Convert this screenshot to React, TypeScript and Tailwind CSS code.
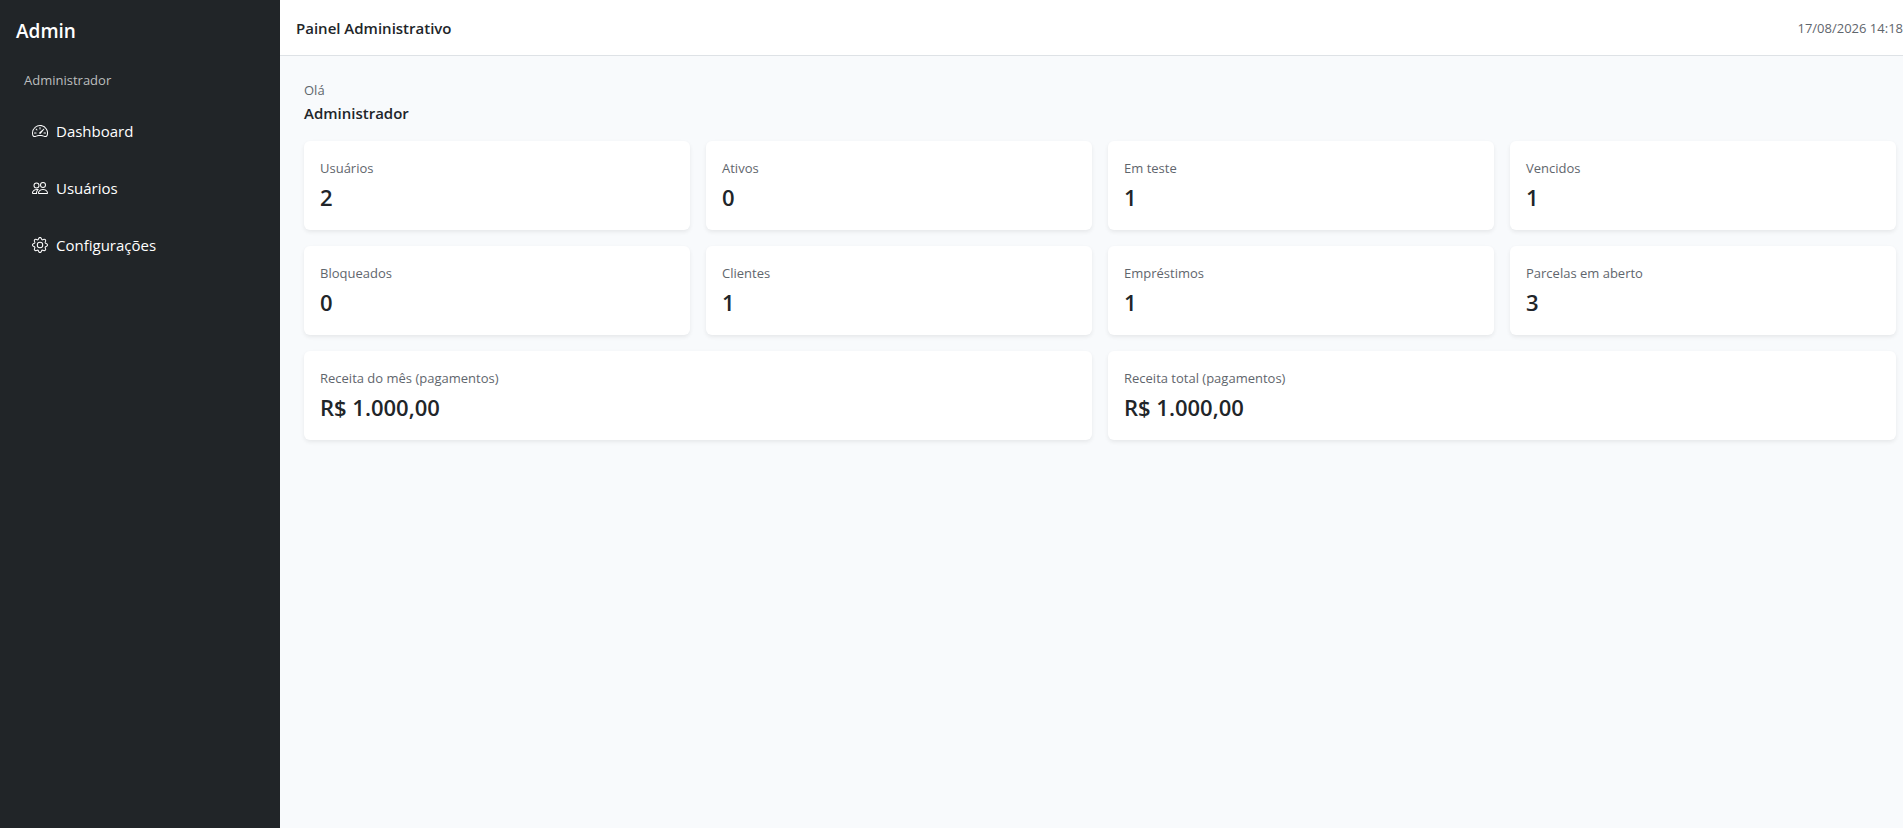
import React from "react";
import { BsGear, BsPeople, BsSpeedometer2 } from "react-icons/bs";
import type { IconType } from "react-icons";

interface NavItemInterface {
  label: string;
  href: string;
  icon: IconType;
}

interface StatInterface {
  label: string;
  value: string;
  wide?: boolean;
}

const navItems: NavItemInterface[] = [
  { label: "Dashboard", href: "#dashboard", icon: BsSpeedometer2 },
  { label: "Usuários", href: "#usuarios", icon: BsPeople },
  { label: "Configurações", href: "#configuracoes", icon: BsGear },
];

const stats: StatInterface[] = [
  { label: "Usuários", value: "2" },
  { label: "Ativos", value: "0" },
  { label: "Em teste", value: "1" },
  { label: "Vencidos", value: "1" },
  { label: "Bloqueados", value: "0" },
  { label: "Clientes", value: "1" },
  { label: "Empréstimos", value: "1" },
  { label: "Parcelas em aberto", value: "3" },
  { label: "Receita do mês (pagamentos)", value: "R$ 1.000,00", wide: true },
  { label: "Receita total (pagamentos)", value: "R$ 1.000,00", wide: true },
];

const Sidebar = () => {
  return (
    <aside className="w-[280px] shrink-0 bg-[#212528] text-white">
      <div className="p-4 pb-3 text-[19px] leading-[30px] font-semibold">
        Admin
      </div>
      <div className="px-6 py-3 text-[13px] leading-[21px] text-[#bcbebf]">
        Administrador
      </div>
      <nav className="flex flex-col gap-px">
        {navItems.map(({ label, href, icon: Icon }) => (
          <a
            key={label}
            href={href}
            className="flex items-center gap-2 px-8 py-4 text-[15px] leading-6"
          >
            <Icon className="size-4" />
            {label}
          </a>
        ))}
      </nav>
    </aside>
  );
};

const StatCard = ({ label, value, wide }: StatInterface) => {
  return (
    <div
      className={`rounded-md bg-white px-4 pt-[17px] pb-[15px] shadow-[0_2px_4px_rgba(0,0,0,0.075)] ${
        wide ? "col-span-2" : ""
      }`}
    >
      <div className="text-[13px] leading-[21px] text-[#5f666d]">{label}</div>
      <div className="text-[22px] leading-9 font-semibold">{value}</div>
    </div>
  );
};

const App = () => {
  return (
    <div className="flex min-h-screen overflow-hidden bg-[#f8fafc] font-['Open_Sans','Noto_Sans',sans-serif] text-[#212529]">
      <Sidebar />
      <div className="min-w-0 grow">
        <header className="flex items-center justify-between border-b border-[#dee2e6] bg-white pt-4 pb-[15px] pl-4">
          <h1 className="text-[15px] leading-6 font-semibold">
            Painel Administrativo
          </h1>
          <time className="text-[13px] leading-6 text-[#5f666d]">
            17/08/2026 14:18
          </time>
        </header>
        <main className="py-6 pr-[7px] pl-6">
          <div className="mb-4">
            <div className="text-[13px] leading-[21px] text-[#5f666d]">Olá</div>
            <div className="text-[15px] leading-6 font-semibold">
              Administrador
            </div>
          </div>
          <div className="grid grid-cols-4 gap-4">
            {stats.map((stat) => (
              <StatCard key={stat.label} {...stat} />
            ))}
          </div>
        </main>
      </div>
    </div>
  );
};

export default App;
